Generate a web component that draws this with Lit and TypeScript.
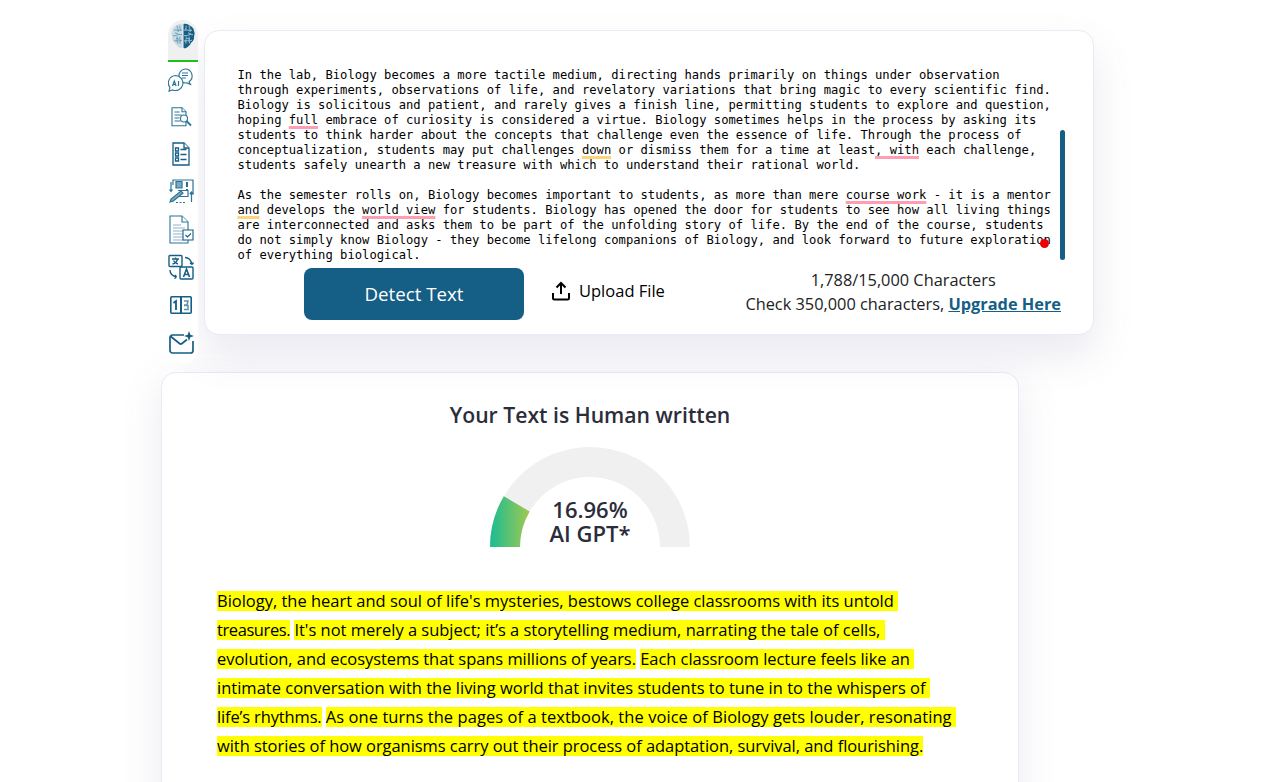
import { LitElement, html, css, svg } from "lit";
import { customElement } from "lit/decorators.js";

const S = "#2b7497";
const D = "#155e85";

const brain = svg`<svg class="brain" width="24" height="27" viewBox="0 0 24 30" preserveAspectRatio="none">
  <path d="M11.500 1C9 .5 6.500 1.500 5 3 2.500 4 1 6.500 1 9c-.8 2-.8 4 0 6-.3 2.500.5 5 2.500 6.500C4.500 24.500 7 27 9.500 28c1 .4 2 .2 2-1z" fill="#c9dce5"/>
  <path d="M12.500 1C15 .5 17.500 1.500 19 3c2.500 1 4 3.500 4 6 .8 2 .8 4 0 6 .3 2.500-.5 5-2.500 6.500C19.500 24.500 17 27 14.500 28c-1 .4-2 .2-2-1z" fill="${D}"/>
  <g fill="none" stroke="#5c93ad" stroke-width=".9">
    <path d="M3 8c3-1 4 1 8 0M2 14c3 1 4-2 9-1M3 20c2-1 4 1 8-1M6 3c0 3 2 4 1 7M6 15c1 3-1 4 1 8M9 3c-1 2 1 3 0 5M9 15c-1 2 1 4 0 8M4 11l3 1M5 17l3 1"/>
  </g>
  <g fill="none" stroke="#b9d2de" stroke-width=".9">
    <path d="M13 8c3-1 5 1 8 0M13 14c3 1 5-2 9-1M13 20c2-1 5 1 8-1M18 3c0 3 2 4 1 7M18 15c1 3-1 4 1 8M15 3c1 2-1 3 0 5M15 15c1 2-1 4 0 8M17 11l3 1M16 17l3 1"/>
  </g></svg>`;

const icons = [
  svg`<svg width="26" height="24" viewBox="0 0 26 24" fill="#fff" stroke="${S}" stroke-width="1.100">
    <path d="M17 1a7 7 0 0 1 4 12.800l1.500 2.700-3.800-1.600A7 7 0 1 1 17 1z"/>
    <path d="M14 5h6M14 7.500h6M14 10h4"/>
    <path d="M7.500 7.500a7.500 7.500 0 1 1-3 14.400L1 23.200l1-3.600A7.500 7.500 0 0 1 7.500 7.500z"/>
    <path d="M4.500 18l1.800-5 1.800 5M5 16.500h2.600M10.500 13v5" stroke-width="1.200"/></svg>`,
  svg`<svg width="21" height="20" viewBox="0 0 21 20" fill="#fff" stroke="${S}" stroke-width="1.100">
    <path d="M1 .8h10l4 4v14H1z"/><path d="M11 .8v4h4M3.500 5h5M3.500 8h7M3.500 11h5M3.500 14h6" />
    <circle cx="13" cy="11.500" r="3.500"/><path d="M15.500 14l4.500 4.500" stroke-width="1.800"/></svg>`,
  svg`<svg width="18" height="24" viewBox="0 0 18 24" fill="#fff" stroke="${D}" stroke-width="1.300">
    <path d="M1 1h11l5 5v17H1z"/><path d="M12 1v5h5"/>
    <path d="M3.500 6h3v3h-3zM3.500 11h3v3h-3zM3.500 16h3v3h-3zM8.500 7.500h6M8.500 12.500h6M8.500 17.500h6"/></svg>`,
  svg`<svg width="25" height="25" viewBox="0 0 25 25" fill="none" stroke="${S}" stroke-width="1.200">
    <path d="M4 6V1h20v14h-3M2 3v9M.5 10.500L2 12.500l1.500-2"/>
    <path d="M7 2.500h6v6.500H7z" fill="#7ba9bf"/><path d="M18 3v5M18 10v1.500" stroke="${D}" stroke-width="1.800"/>
    <path d="M9 11.500h10v6H10" /><path d="M1 23l1-3 10-8 2 2.200-10 8z" fill="#7ba9bf"/>
    <path d="M7 23.500h2M10.500 23.500h2M14 23.500h2M22.500 23v-10M20.800 15l1.700-2 1.700 2"/></svg>`,
  svg`<svg width="25" height="29" viewBox="0 0 25 29" fill="#fff" stroke="${S}" stroke-width="1.100">
    <path d="M1 1h12l6 6v21H1z"/><path d="M13 1v6h6"/>
    <path d="M4 10h8M4 13h12M4 16h12M4 19h12M4 22h12M4 25h12" stroke="#8fb6c9"/>
    <path d="M14 15h10v10H14z" stroke="${D}"/><path d="M16.500 20l2 2 3.500-3.500" stroke="${D}"/></svg>`,
  svg`<svg width="26" height="26" viewBox="0 0 26 26" fill="none" stroke="${D}" stroke-width="1.400">
    <path d="M2 1.500h11a1 1 0 0 1 1 1v9a1 1 0 0 1-1 1H2a1 1 0 0 1-1-1v-9a1 1 0 0 1 1-1z" />
    <path d="M4 5h7M7.500 3.500V5M9.500 5c-.5 2.500-2.500 4.500-5 5M5.500 6.500c1 2 2.500 3 4.500 3.500"/>
    <path d="M12 14a1 1 0 0 1 1-1h11a1 1 0 0 1 1 1v10a1 1 0 0 1-1 1H13a1 1 0 0 1-1-1z"/>
    <path d="M15.500 23l3-8 3 8M16.500 20.500h4" stroke-width="1.600"/>
    <path d="M17 3.500c3 0 6 2.500 7 7M24 10.500l1.500-2M24 10.500l-2-1.500M2 16c0 3.500 2.500 6 6.500 7M8.500 23l-2 1.500M8.500 23l-1.500-2"/></svg>`,
  svg`<svg width="22" height="18" viewBox="0 0 22 18">
    <rect x=".8" y=".8" width="20.400" height="16.400" rx="1" fill="#fff" stroke="${D}" stroke-width="1.600"/>
    <rect x="10" y="1" width="2" height="16" fill="${D}"/>
    <path d="M3.500 7L6 5v9" fill="none" stroke="${D}" stroke-width="1.800"/>
    <path d="M14 5h4l-1 4h-3M14 9.500h4v4h-4" fill="none" stroke="#5c93ad" stroke-width="1.500"/></svg>`,
  svg`<svg width="25" height="24" viewBox="0 0 25 24" fill="none" stroke="${D}" stroke-width="1.700" stroke-linejoin="round">
    <path d="M15 4H3.500A2.500 2.500 0 0 0 1 6.500v13A2.500 2.500 0 0 0 3.500 22h18a2.500 2.500 0 0 0 2.500-2.500V10"/>
    <path d="M1.800 5.500l8.700 7a2 2 0 0 0 2.500 0l5-4"/>
    <path d="M20 0l1.300 3.700L25 5l-3.700 1.300L20 10l-1.300-3.700L15 5l3.700-1.300z" fill="${D}" stroke="none"/></svg>`,
];

const mark = (t: string, c = "r") => html`<span class=${"m " + c}>${t}</span>`;

@customElement("app-root")
export class AppRoot extends LitElement {
  static styles = css`
    :host { display: block; height: 782px; overflow: hidden; background: #fff; font-family: "Open Sans", "Noto Sans", sans-serif; }
    .top { display: flex; align-items: flex-start; margin: 20px 0 0 168px; }
    .side { position: relative; z-index: 1; width: 30px; height: 343px; background: #fff; border-radius: 0 0 14px 14px; flex: none; }
    .logo { box-sizing: border-box; height: 42px; background: #f0f0f0; border-radius: 15px 15px 0 0; border-bottom: 2px solid #1cc01c; display: flex; justify-content: center; padding-top: 3px; }
    .icons { width: 25px; margin-top: -1px; display: grid; grid-template-rows: 37px 37px 37px 38px 38px 38px 38px 37px; justify-items: center; align-items: center; }
    .icons svg { display: block; }
    .card { position: relative; box-sizing: border-box; margin: 10px 0 0 6px; width: 890px; height: 305px; background: #fff; border: 1px solid #e8eaf6; border-radius: 15px; padding: 36.500px 0 0 32.500px; box-shadow: 0 20px 40px rgba(100,100,150,.14); }
    pre { margin: 0; font: 12.180px/15px "DejaVu Sans Mono", monospace; color: #000; }
    .m { text-decoration: underline 3px; text-underline-offset: 2px; text-decoration-skip-ink: none; }
    .r { text-decoration-color: #ff9db2; }
    .y { text-decoration-color: #fdd47a; }
    .thumb { position: absolute; left: 855px; top: 99px; width: 5px; height: 130px; background: #155e85; border-radius: 3px; }
    .dot { position: absolute; left: 834.500px; top: 207.500px; width: 9px; height: 9px; background: #ee0000; border-radius: 50%; }
    .actions { display: flex; align-items: flex-start; margin: 5px 32px 0 66.500px; }
    .detect { width: 220px; height: 52px; border: 0; border-radius: 8px; background: #155e85; color: #fff; font: 400 18.700px "Open Sans", sans-serif; padding: 0; }
    .upload { display: flex; align-items: center; gap: 8px; margin: 11px 0 0 27px; font-size: 16.500px; color: #000; height: 24px; }
    .info { margin: 0 0 0 auto; text-align: center; font-size: 16.330px; line-height: 24px; color: #222; }
    .info a { color: #155e85; font-weight: 700; text-decoration: underline; }
    .result { box-sizing: border-box; width: 858px; height: 500px; margin: 9px 0 0 161px; background: #fff; border: 1px solid #e8eaf6; border-radius: 15px; padding-top: 27px; box-shadow: 0 10px 40px rgba(100,100,150,.13); }
    h2 { margin: 0; text-align: center; font-size: 21.200px; line-height: 30px; font-weight: 600; color: #2b2d3a; }
    .gauge { position: relative; width: 200px; height: 100px; margin: 17px auto 0; }
    .gauge svg { display: block; }
    .val { position: absolute; left: 0; right: 0; top: 50px; text-align: center; font-size: 22px; line-height: 24px; font-weight: 600; color: #2b2d3a; }
    .text { margin: 39px 0 0 55px; font-size: 16.480px; line-height: 29px; color: #000; white-space: pre; }
    mark { background: linear-gradient(#ffff00, #ffff00) 0 55% / 100% 20px no-repeat; color: #000; }
    .tight { letter-spacing: -.4px; }
    .t1 { letter-spacing: -.04px; }
    .t2 { letter-spacing: -.13px; }
    .w1 { letter-spacing: .02px; }
    .w2 { letter-spacing: .07px; }
  `;

  render() {
    return html`
      <div class="top">
        <nav class="side">
          <div class="logo">${brain}</div>
          <div class="icons">${icons}</div>
        </nav>
        <section class="card">
<pre>In the lab, Biology becomes a more tactile medium, directing hands primarily on things under observation
through experiments, observations of life, and revelatory variations that bring magic to every scientific find.
Biology is solicitous and patient, and rarely gives a finish line, permitting students to explore and question,
hoping ${mark("full")} embrace of curiosity is considered a virtue. Biology sometimes helps in the process by asking its
students to think harder about the concepts that challenge even the essence of life. Through the process of
conceptualization, students may put challenges ${mark("down", "y")} or dismiss them for a time at least${mark(", with")} each challenge,
students safely unearth a new treasure with which to understand their rational world.

As the semester rolls on, Biology becomes important to students, as more than mere ${mark("course work")} - it is a mentor
${mark("and", "y")} develops the ${mark("world view")} for students. Biology has opened the door for students to see how all living things
are interconnected and asks them to be part of the unfolding story of life. By the end of the course, students
do not simply know Biology - they become lifelong companions of Biology, and look forward to future exploration
of everything biological.</pre>
          <div class="thumb"></div>
          <div class="dot"></div>
          <div class="actions">
            <button class="detect">Detect Text</button>
            <div class="upload">
              <svg width="20" height="20" viewBox="0 0 20 20" fill="none" stroke="#000" stroke-width="2"><path d="M10 13V2.500M5.500 6.500L10 2l4.500 4.500M2 12v5a1.500 1.500 0 0 0 1.500 1.500h13A1.500 1.500 0 0 0 18 17v-5"/></svg>
              <span>Upload File</span>
            </div>
            <div class="info">1,788/15,000 Characters<br />Check 350,000 characters, <a>Upgrade Here</a></div>
          </div>
        </section>
      </div>
      <section class="result">
        <h2>Your Text is Human written</h2>
        <div class="gauge">
          <svg width="200" height="100" viewBox="0 0 200 100">
            <defs><linearGradient id="g" gradientUnits="userSpaceOnUse" x1="0" y1="0" x2="40" y2="0"><stop offset="0" stop-color="#1abc94"/><stop offset="1" stop-color="#a3c94e"/></linearGradient></defs>
            <path d="M0 100A100 100 0 0 1 200 100H170A70 70 0 0 0 30 100z" fill="#f0f0f0"/>
            <path d="M0 100A100 100 0 0 1 13.800 49.200L39.700 64.500A70 70 0 0 0 30 100z" fill="url(#g)"/>
          </svg>
          <div class="val">16.96%<br />AI GPT*</div>
        </div>
        <div class="text"><mark>Biology, the heart and soul of life's mysteries, bestows college classrooms with its untold </mark>
<mark class="tight">treasures.</mark> <mark>It's not merely a subject; it’s a storytelling medium, narrating the tale of cells, </mark>
<mark class="t1">evolution, and ecosystems that spans millions of years.</mark> <mark class="t1">Each classroom lecture feels like an </mark>
<mark class="w1">intimate conversation with the living world that invites students to tune in to the whispers of </mark>
<mark class="t2">life’s rhythms.</mark> <mark class="w2">As one turns the pages of a textbook, the voice of Biology gets louder, resonating </mark>
<mark class="t1">with stories of how organisms carry out their process of adaptation, survival, and flourishing.</mark></div>
      </section>
    `;
  }
}
